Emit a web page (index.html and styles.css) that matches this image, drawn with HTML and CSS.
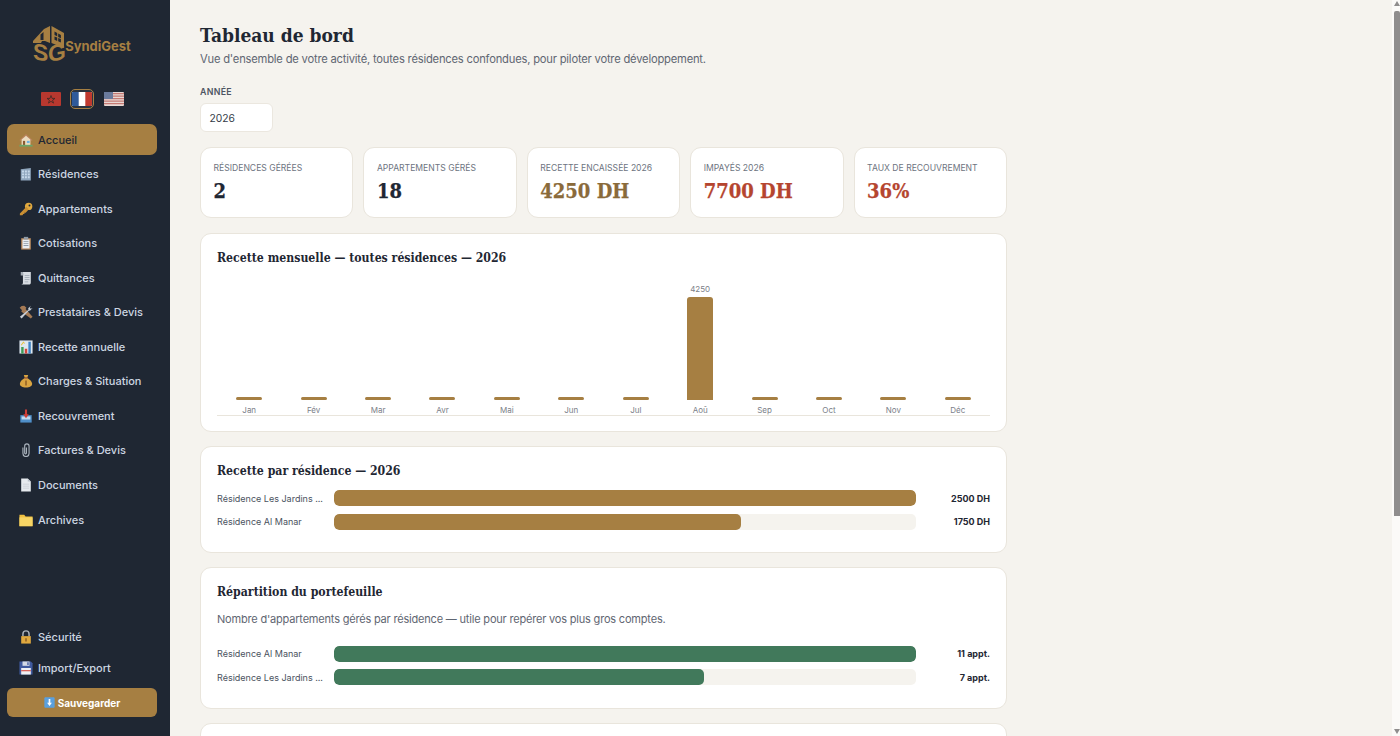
FILE: index.html
```html
<!DOCTYPE html>
<html lang="fr">
<head>
<meta charset="utf-8">
<title>SyndiGest</title>
<link rel="stylesheet" href="styles.css">
</head>
<body>
<svg class="defs" aria-hidden="true">
  <symbol id="i-house" viewBox="0 0 16 16"><path d="M8 1 .5 8l1 1L3 7.800V14h10V7.800L14.500 9l1-1z" fill="#b9835a"/><path d="M8 3 13 7.500V14H3V7.500z" fill="#ecdcc0"/><path d="M4.500 9H7v5H4.500z" fill="#8a5a33"/><path d="M9 9h3.200v2.500H9z" fill="#6fb0dc"/><path d="M.5 13.500h15V15.500H.5z" fill="#6aa66a"/></symbol>
  <symbol id="i-building" viewBox="0 0 16 16"><path d="M2 2.500 13.500 1v14.500H2z" fill="#8fa6bd"/><path d="M3.500 4h2.200v2.200H3.500zM6.800 4H9v2.200H6.800zM10.100 4h2.200v2.200h-2.200zM3.500 7.300h2.200v2.200H3.500zM6.800 7.300H9v2.200H6.800zM10.100 7.300h2.200v2.200h-2.200zM3.500 10.600h2.200v2.200H3.500zM6.800 10.600H9v2.200H6.800zM10.100 10.600h2.200v2.200h-2.200z" fill="#c7d9ea"/></symbol>
  <symbol id="i-key" viewBox="0 0 16 16"><circle cx="11" cy="5" r="4.200" fill="#e0a93f"/><circle cx="12" cy="4" r="1.100" fill="#1f2733"/><path d="M8.500 5.500 1 13v2h3l.8-1.200h1.400v-1.500h1.500L11 8.500z" fill="#c98f33"/></symbol>
  <symbol id="i-clip" viewBox="0 0 16 16"><path d="M2.500 2.500h11V15.500h-11z" fill="#b98a5e"/><path d="M4 4h8v10.200H4z" fill="#e8edf2"/><path d="M5.200 6h5.600v.9H5.200zM5.200 8.200h5.600v.9H5.200zM5.200 10.400h5.600v.9H5.200z" fill="#8f9aa6"/><path d="M5.500 1h5v3h-5z" fill="#8f9aa6"/></symbol>
  <symbol id="i-receipt" viewBox="0 0 16 16"><path d="M3 1h10.500v12c0 1.500-.8 2.500-2 2.500H2.500C3.800 15.500 4.500 14.500 4.500 13.500V3C4.500 2 4 1 3 1z" fill="#d8dde3"/><path d="M2 1h1.500c.8 0 1.500.8 1.500 2v2H2z" fill="#a5adb6"/><path d="M6.500 4.500h5.500v.9H6.500zM6.500 7h5.500v.9H6.500zM6.500 9.500h5.500v.9H6.500zM6.500 12h4v.9h-4z" fill="#9aa5b1"/></symbol>
  <symbol id="i-tools" viewBox="0 0 16 16"><path d="M3 1 .8 3.200 3.500 6 2.500 7 4 8.500l9.500 7 2-2L7.500 4.500 8.500 3 6 .8z" fill="#a47a55"/><path d="M13.500.8 10.500 3.800l.3 1.500L1 13.500 3 15.500 11.200 6.500l1.600-.2L15.500 3.500l-2 .8-1.200-1.200z" fill="#c7ced6"/></symbol>
  <symbol id="i-chart" viewBox="0 0 16 16"><path d="M.5.500h15v15H.5z" fill="#dde7f0"/><path d="M2.500 8H5.300v7.500H2.500z" fill="#3f9d57"/><path d="M6.600 10H9.400v5.500H6.600z" fill="#d4463c"/><path d="M10.700 2h2.800v13.500h-2.800z" fill="#3f83c4"/><path d="m2.500 6 2.500-3.500 1.500 1.500" stroke="#e8c23c" stroke-width="1.200" fill="none"/></symbol>
  <symbol id="i-bag" viewBox="0 0 16 16"><path d="M5.500 1h5L9.500 4.200h-3z" fill="#d9a441"/><path d="M6.500 4.500h3C13 6.500 15 9 15 11.200c0 3-3 4.300-7 4.300s-7-1.300-7-4.300C1 9 3 6.500 6.500 4.500z" fill="#d9a441"/><path d="M7.200 7.500h1.600v5.500H7.200z" fill="#8a5a22"/><path d="M6.200 4h3.600v1.200H6.200z" fill="#a04a35"/></symbol>
  <symbol id="i-inbox" viewBox="0 0 16 16"><path d="M1.500 7h13v8.500h-13z" fill="#4f8fc9"/><path d="M3 8.500h10V12H3z" fill="#c4dbef"/><path d="M6.800.5h2.400v5.500h2L8 10.500 4.800 6h2z" fill="#cf3f38"/></symbol>
  <symbol id="i-paperclip" viewBox="0 0 16 16"><path d="M4.500 5v7a3.500 3.500 0 0 0 7 0V3.500a2.500 2.500 0 0 0-5 0V11.500a1 1 0 0 0 2 0V5" fill="none" stroke="#aab3bd" stroke-width="1.300"/></symbol>
  <symbol id="i-doc" viewBox="0 0 16 16"><path d="M2.500.5h7.500l3.500 3.500v11.500h-11z" fill="#e6eaee"/><path d="M10 .5V4h3.500z" fill="#b8c0c9"/><path d="M4.500 6.500h7v.8h-7zM4.500 8.800h7v.8h-7zM4.500 11.100h7v.8h-7z" fill="#c5ccd4"/></symbol>
  <symbol id="i-folder" viewBox="0 0 16 16"><path d="M.5 2h5.500l1.500 2h8v11H.5z" fill="#f0c040"/><path d="M.5 5h15v10H.5z" fill="#f7d565"/></symbol>
  <symbol id="i-lock" viewBox="0 0 16 16"><path d="M4.500 7V4.500a3.500 3.500 0 0 1 7 0V7" fill="none" stroke="#aab2bb" stroke-width="1.700"/><path d="M2.500 7h11v8.500h-11z" fill="#e0a93f"/><path d="M7.200 9.500h1.600v3.500H7.200z" fill="#8a5a22"/></symbol>
  <symbol id="i-floppy" viewBox="0 0 16 16"><path d="M.5.500h13l2 2v13H.5z" fill="#3f5a9f"/><path d="M4 .5h8v5H4z" fill="#d3dae6"/><path d="M9.500 1.300h1.500v3.400H9.500z" fill="#3f5a9f"/><path d="M2.500 8h11v7.500h-11z" fill="#eef1f4"/><path d="M2.500 10.500h11v1.200h-11z" fill="#d4463c"/></symbol>
  <symbol id="i-down" viewBox="0 0 16 16"><rect x=".5" y=".5" width="15" height="15" rx="1.500" fill="#5aa0de"/><path d="M6.800 3h2.400v5.500h2.300L8 13 4.500 8.500h2.300z" fill="#fff"/></symbol>
</svg>
<div class="app">
  <aside class="sidebar">
    <div class="brand">
      <svg class="logo" width="32" height="38" viewBox="0 0 32 38">
        <path d="M0 15 11 3l6-3v17L12 15l-3 0-1 2H0z" fill="#a67f42"/>
        <path d="M7.500 8.500 10.500 6v8H7.500z" fill="#1f2733"/>
        <path d="M18.500 0 31 7v15l-12.500-5z" fill="#a67f42"/>
        <path d="M21.500 5.500l2.700 1.400v3.300l-2.700-1.100zM25.200 7.500l2.700 1.400v3.300l-2.700-1.100zM21.500 10.500l2.700 1.100v3.300l-2.700-1.100zM25.200 12l2.700 1.100v3.300l-2.700-1.100z" fill="#1f2733"/>
        <text class="logo-sg" transform="translate(0 33) skewY(10)">S</text>
        <text class="logo-sg" transform="translate(15 36) skewY(-10)">G</text>
      </svg>
      <span class="brand-name">SyndiGest</span>
    </div>
    <div class="flags">
      <span class="flag-btn">
        <svg width="20" height="14" viewBox="0 0 20 14"><rect width="20" height="14" rx="1" fill="#b8382f"/><path d="m10 3.500 1 2.900h3l-2.400 1.800.9 2.900L10 9.300l-2.500 1.800.9-2.900L6 6.400h3z" fill="none" stroke="#3c2a24" stroke-width=".8"/></svg>
      </span>
      <span class="flag-btn flag-active">
        <svg width="20" height="14" viewBox="0 0 20 14"><rect width="20" height="14" rx="1" fill="#fff"/><path d="M0 1a1 1 0 0 1 1-1h5.700v14H1a1 1 0 0 1-1-1z" fill="#2f5a9a"/><path d="M13.300 0H19a1 1 0 0 1 1 1v12a1 1 0 0 1-1 1h-5.700z" fill="#c0392f"/></svg>
      </span>
      <span class="flag-btn">
        <svg width="20" height="14" viewBox="0 0 20 14"><rect width="20" height="14" rx="1" fill="#e8d8d4"/><path d="M0 1h20v1.300H0zM0 3.500h20v1.300H0zM0 6h20v1.300H0zM0 8.500h20v1.300H0zM0 11h20v1.300H0z" fill="#c47a74"/><rect width="9" height="7" fill="#6a7a9c"/></svg>
      </span>
    </div>
    <nav class="nav">
      <a class="nav-item active"><svg class="ico"><use href="#i-house"/></svg>Accueil</a>
      <a class="nav-item"><svg class="ico"><use href="#i-building"/></svg>Résidences</a>
      <a class="nav-item"><svg class="ico"><use href="#i-key"/></svg>Appartements</a>
      <a class="nav-item"><svg class="ico"><use href="#i-clip"/></svg>Cotisations</a>
      <a class="nav-item"><svg class="ico"><use href="#i-receipt"/></svg>Quittances</a>
      <a class="nav-item"><svg class="ico"><use href="#i-tools"/></svg>Prestataires &amp; Devis</a>
      <a class="nav-item"><svg class="ico"><use href="#i-chart"/></svg>Recette annuelle</a>
      <a class="nav-item"><svg class="ico"><use href="#i-bag"/></svg>Charges &amp; Situation</a>
      <a class="nav-item"><svg class="ico"><use href="#i-inbox"/></svg>Recouvrement</a>
      <a class="nav-item"><svg class="ico"><use href="#i-paperclip"/></svg>Factures &amp; Devis</a>
      <a class="nav-item"><svg class="ico"><use href="#i-doc"/></svg>Documents</a>
      <a class="nav-item"><svg class="ico"><use href="#i-folder"/></svg>Archives</a>
    </nav>
    <div class="side-bottom">
      <a class="nav-item"><svg class="ico"><use href="#i-lock"/></svg>Sécurité</a>
      <a class="nav-item"><svg class="ico"><use href="#i-floppy"/></svg>Import/Export</a>
      <button class="save"><svg class="ico-s"><use href="#i-down"/></svg>Sauvegarder</button>
    </div>
  </aside>
  <main class="main">
    <div class="content">
      <h1 class="title">Tableau de bord</h1>
      <p class="subtitle">Vue d'ensemble de votre activité, toutes résidences confondues, pour piloter votre développement.</p>
      <label class="year-label">ANNÉE</label>
      <div class="year-input">2026</div>
      <section class="kpis">
        <div class="kpi"><div class="kpi-label">RÉSIDENCES GÉRÉES</div><div class="kpi-value">2</div></div>
        <div class="kpi"><div class="kpi-label">APPARTEMENTS GÉRÉS</div><div class="kpi-value">18</div></div>
        <div class="kpi"><div class="kpi-label">RECETTE ENCAISSÉE 2026</div><div class="kpi-value gold">4250 DH</div></div>
        <div class="kpi"><div class="kpi-label">IMPAYÉS 2026</div><div class="kpi-value red">7700 DH</div></div>
        <div class="kpi"><div class="kpi-label">TAUX DE RECOUVREMENT</div><div class="kpi-value red">36%</div></div>
      </section>
      <section class="card card-chart">
        <h2 class="card-title">Recette mensuelle — toutes résidences — 2026</h2>
        <div class="chart">
          <div class="col"><div class="bar"></div><span class="month">Jan</span></div>
          <div class="col"><div class="bar"></div><span class="month">Fév</span></div>
          <div class="col"><div class="bar"></div><span class="month">Mar</span></div>
          <div class="col"><div class="bar"></div><span class="month">Avr</span></div>
          <div class="col"><div class="bar"></div><span class="month">Mai</span></div>
          <div class="col"><div class="bar"></div><span class="month">Jun</span></div>
          <div class="col"><div class="bar"></div><span class="month">Jul</span></div>
          <div class="col"><span class="bar-val">4250</span><div class="bar bar-full"></div><span class="month">Aoû</span></div>
          <div class="col"><div class="bar"></div><span class="month">Sep</span></div>
          <div class="col"><div class="bar"></div><span class="month">Oct</span></div>
          <div class="col"><div class="bar"></div><span class="month">Nov</span></div>
          <div class="col"><div class="bar"></div><span class="month">Déc</span></div>
        </div>
      </section>
      <section class="card card-rows">
        <h2 class="card-title">Recette par résidence — 2026</h2>
        <div class="hrows">
          <div class="hrow"><span class="hname">Résidence Les Jardins ...</span><div class="track"><div class="fill" style="width:100%"></div></div><span class="hval">2500 DH</span></div>
          <div class="hrow"><span class="hname">Résidence Al Manar</span><div class="track"><div class="fill" style="width:70%"></div></div><span class="hval">1750 DH</span></div>
        </div>
      </section>
      <section class="card card-rows">
        <h2 class="card-title">Répartition du portefeuille</h2>
        <p class="card-note">Nombre d'appartements gérés par résidence — utile pour repérer vos plus gros comptes.</p>
        <div class="hrows">
          <div class="hrow"><span class="hname">Résidence Al Manar</span><div class="track"><div class="fill green" style="width:100%"></div></div><span class="hval">11 appt.</span></div>
          <div class="hrow"><span class="hname">Résidence Les Jardins ...</span><div class="track"><div class="fill green" style="width:63.6%"></div></div><span class="hval">7 appt.</span></div>
        </div>
      </section>
      <section class="card card-last"></section>
    </div>
  </main>
  <div class="scrollbar" aria-hidden="true">
    <svg class="sb-arrow" width="6" height="5" viewBox="0 0 6 5"><path d="M3 0 6 5H0z" fill="#8f8d8d"/></svg>
    <div class="sb-thumb"></div>
    <svg class="sb-arrow sb-arrow-down" width="6" height="5" viewBox="0 0 6 5"><path d="M0 0H6L3 5z" fill="#8f8d8d"/></svg>
  </div>
</div>
</body>
</html>
```
FILE: styles.css
```css
* { box-sizing: border-box; }
html, body { margin: 0; height: 100%; overflow: hidden; }
body { font-family: "Inter", "Noto Sans", sans-serif; color: #1f2733; background: #f5f3ee; }
.defs { display: none; }
.app { display: flex; height: 736px; }

.sidebar { width: 170px; flex: none; background: #1f2733; display: flex; flex-direction: column; padding: 26px 13px 19px 7px; }
.brand { display: flex; align-items: flex-start; justify-content: center; height: 38px; margin-bottom: 24px; }
.logo { flex: none; overflow: visible; }
.logo-sg { font-family: "Liberation Sans", sans-serif; font-weight: 700; font-size: 23px; fill: #a67f42; }
.brand-name { font-size: 13px; font-weight: 700; color: #a67f42; margin-top: 12px; line-height: 16px; }
.flags { display: flex; justify-content: center; gap: 7.500px; align-items: center; margin-bottom: 15px; height: 21px; }
.flag-btn { display: flex; padding: 2px 1px; border: 1.500px solid transparent; border-radius: 5px; }
.flag-active { border-color: #a67f42; background: #2b3441; }
.nav { display: flex; flex-direction: column; gap: 3.550px; }
.nav-item { display: flex; align-items: center; gap: 5px; height: 31px; padding-left: 12px; border-radius: 7px; font-size: 11px; font-weight: 500; color: #cdd6e2; }
.ico { width: 14px; height: 14px; flex: none; }
.active { background: #a67f42; color: #1f2733; }
.side-bottom { margin-top: auto; display: flex; flex-direction: column; }
.save { display: flex; align-items: center; justify-content: center; gap: 3px; height: 29px; margin-top: 5px; padding-top: 1px; border: 0; border-radius: 6px; background: #a67f42; color: #fff; font: 700 10px "Inter", sans-serif; }
.ico-s { width: 11px; height: 11px; }

.main { flex: 1; height: 736px; overflow: hidden; padding: 24px 30px; }
.scrollbar { position: absolute; top: 0; right: 0; width: 8px; height: 736px; padding: 1px 0 2px 2px; background: #fbfaf8; display: flex; flex-direction: column; }
.sb-arrow { display: block; flex: none; }
.sb-arrow-down { margin-top: auto; }
.sb-thumb { width: 6px; height: 505px; margin-top: 5px; background: #8f8d8d; border-radius: 2px 2px 0 0; }
.content { width: 807px; }
.title { margin: 0; font: 700 19px/23px "DejaVu Serif Condensed", "DejaVu Serif", serif; color: #1f2733; }
.subtitle { margin: 3px 0 0; font-size: 11.200px; letter-spacing: -.2px; line-height: 18px; color: #5f6672; }
.year-label { display: block; margin-top: 18px; font-size: 8.800px; line-height: 12px; font-weight: 600; color: #4d5562; letter-spacing: .3px; }
.year-input { width: 73px; height: 29px; margin-top: 5px; padding-left: 8.500px; background: #fff; border: 1px solid #ebe7df; border-radius: 6px; font-size: 10.300px; line-height: 28px; color: #333b47; }
.kpis { display: grid; grid-template-columns: repeat(5, 1fr); gap: 10px; margin-top: 15px; }
.kpi { height: 71px; padding: 14px 12.500px; background: #fff; border: 1px solid #e9e5dc; border-radius: 11px; }
.kpi-label { font-size: 8.600px; line-height: 12px; color: #6d7480; }
.kpi-value { margin-top: 5px; font: 700 20px/24px "DejaVu Serif Condensed", "DejaVu Serif", serif; color: #1f2733; -webkit-text-stroke: .25px currentColor; }
.gold { color: #8a6a3a; }
.red { color: #b5452f; }

.card { margin-top: 14px; padding: 15px 16px 20px; background: #fff; border: 1px solid #e9e5dc; border-radius: 11px; }
.card-title { margin: 0; font: 700 12.200px/18px "DejaVu Serif Condensed", "DejaVu Serif", serif; color: #1f2733; }
.card-chart { margin-top: 15px; height: 199px; }
.chart { display: flex; height: 140px; margin-top: 9px; border-bottom: 1px solid #e9e5dc; }
.col { flex: 1; display: flex; flex-direction: column; align-items: center; justify-content: flex-end; }
.bar { width: 26px; height: 3px; background: #a67f42; border-radius: 3px; }
.bar-full { height: 103px; border-radius: 3px 3px 0 0; }
.bar-val { font-size: 8px; line-height: 10px; margin-bottom: 3px; color: #7b8088; }
.month { font-size: 8px; line-height: 10px; margin-top: 5px; color: #7b8088; }
.card-rows { padding-bottom: 22.500px; }
.hrows { display: flex; flex-direction: column; gap: 7.500px; margin-top: 10px; }
.hrow { display: flex; align-items: center; height: 16px; }
.hname { width: 106px; flex: none; margin-right: 11px; font-size: 9px; color: #4a525e; white-space: nowrap; }
.track { width: 582px; flex: none; height: 16px; background: #f5f3ee; border-radius: 5px; overflow: hidden; }
.fill { height: 100%; background: #a67f42; border-radius: 5px; }
.green { background: #41795b; }
.hval { flex: 1; text-align: right; font-size: 9px; font-weight: 700; color: #1f2733; }
.card-note { margin: 9px 0 0; font-size: 11px; letter-spacing: -.19px; line-height: 18px; color: #5f6672; }
.card-note + .hrows { margin-top: 17.500px; margin-bottom: .5px; }
.card-last { height: 120px; }
```
